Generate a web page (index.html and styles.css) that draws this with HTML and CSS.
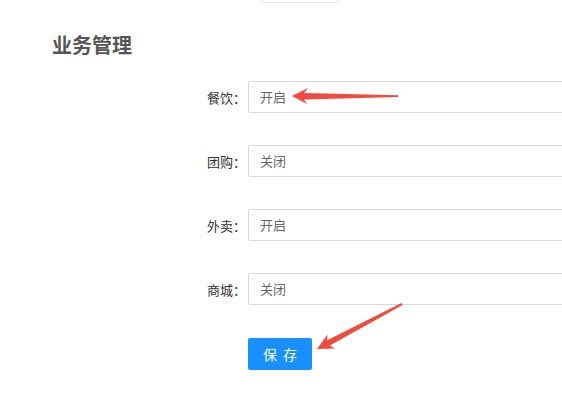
FILE: index.html
```html
<!DOCTYPE html>
<html lang="zh-CN">
<head>
    <meta charset="UTF-8">
    <meta name="viewport" content="width=device-width, initial-scale=1.0">
    <title>业务管理</title>
    <link rel="stylesheet" href="styles.css">
</head>
<body>

    <div class="top-tab"></div>

    <h2 class="section-title">业务管理</h2>

    <div class="biz-form">
        <div class="form-row">
            <div class="form-label">餐饮：</div>
            <div class="form-value">开启</div>
        </div>
        <div class="form-row">
            <div class="form-label">团购：</div>
            <div class="form-value">关闭</div>
        </div>
        <div class="form-row">
            <div class="form-label">外卖：</div>
            <div class="form-value">开启</div>
        </div>
        <div class="form-row">
            <div class="form-label">商城：</div>
            <div class="form-value">关闭</div>
        </div>
        <div class="form-row form-actions">
            <button class="btn-save">保存</button>
        </div>
    </div>

    <!-- annotation arrows drawn over the form -->
    <svg class="marks" width="562" height="397" viewBox="0 0 562 397">
        <polygon points="292,96 308,88 304,93 398,95.2 398,97 304,99.5 307,104" />
        <polygon points="317,349 327.5,334.4 327.1,340.2 401.5,303.1 402.5,304.9 329.9,345.6 334.9,348.6" />
    </svg>

</body>
</html>
```

FILE: styles.css
```css
body {
    margin: 0;
    position: relative;
    overflow: hidden;
    background-color: white;
    font-family: "Noto Sans CJK SC", "Noto Sans", sans-serif;
    color: #333;
}
.top-tab {
    margin-left: 259px;
    width: 78px;
    height: 2px;
    border: 1px solid #ebebeb;
    border-top: none;
    border-radius: 0 0 4px 4px;
}
.section-title {
    margin: 28px 0 0 52px;
    font-size: 20px;
    line-height: 28px;
    font-weight: bold;
    color: #555;
}
.biz-form {
    margin-top: 22px;
    display: flex;
    flex-direction: column;
    gap: 32px;
}
.form-row {
    display: flex;
    align-items: center;
    height: 32px;
}
.form-label {
    flex: 0 0 200px;
    margin-left: 46px;
    margin-right: 2px;
    text-align: right;
    font-size: 13px;
    color: #333;
}
.form-value {
    flex: 0 0 340px;
    box-sizing: border-box;
    height: 32px;
    line-height: 30px;
    padding-left: 11px;
    border: 1px solid #d9d9d9;
    border-radius: 2px;
    font-size: 13px;
    color: #666;
}
.form-actions {
    margin-top: 1px;
    padding-left: 248px;
}
.btn-save {
    box-sizing: border-box;
    width: 64px;
    height: 32px;
    padding: 0 9px 0 15px;
    border: none;
    border-radius: 2px;
    background: #1890ff;
    color: white;
    font-family: inherit;
    font-size: 14px;
    letter-spacing: 6px;
    text-align: left;
}
.marks {
    position: absolute;
    left: 0;
    top: 0;
    pointer-events: none;
}
.marks polygon {
    fill: #ee4c3e;
}
```
